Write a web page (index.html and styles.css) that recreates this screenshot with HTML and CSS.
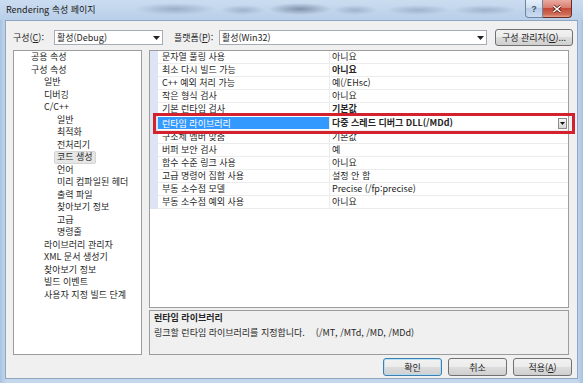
FILE: index.html
```html
<!DOCTYPE html>
<html lang="ko">

<head>
    <meta charset="UTF-8">
    <meta name="viewport" content="width=device-width, initial-scale=1.0">
    <title>Rendering 속성 페이지</title>
    <link rel="stylesheet" href="styles.css">
</head>

<body>
    <div class="window">
        <!-- Title bar -->
        <div class="titlebar">
            <span class="title">Rendering 속성 페이지</span>
            <div class="caption">
                <span class="cap-btn help">?</span>
                <span class="cap-btn close">
                    <svg width="10" height="8" viewBox="0 0 10 8">
                        <path d="M1.5 1 L8.5 7 M8.5 1 L1.5 7" stroke="#5a1d16" stroke-width="3" />
                        <path d="M1.5 1 L8.5 7 M8.5 1 L1.5 7" stroke="#fff" stroke-width="1.6" />
                    </svg>
                </span>
            </div>
        </div>

        <div class="client">
            <!-- Configuration / platform -->
            <div class="toolbar">
                <span class="tb-label cfg-label">구성(<u>C</u>):</span>
                <div class="combo combo-cfg">
                    <span>활성(Debug)</span>
                    <svg class="arrow" width="7" height="4" viewBox="0 0 7 4"><path d="M0 0h7L3.5 4z" fill="#222" /></svg>
                </div>
                <span class="tb-label plat-label">플랫폼(<u>P</u>):</span>
                <div class="combo combo-plat">
                    <span>활성(Win32)</span>
                    <svg class="arrow" width="7" height="4" viewBox="0 0 7 4"><path d="M0 0h7L3.5 4z" fill="#222" /></svg>
                </div>
                <button class="btn mgr">구성 관리자(<u>O</u>)...</button>
            </div>

            <div class="main">
                <!-- Category tree -->
                <ul class="tree">
                    <li class="l1">공용 속성</li>
                    <li class="l1">구성 속성</li>
                    <li class="l2">일반</li>
                    <li class="l2">디버깅</li>
                    <li class="l2">C/C++</li>
                    <li class="l3">일반</li>
                    <li class="l3">최적화</li>
                    <li class="l3">전처리기</li>
                    <li class="l3"><span class="sel">코드 생성</span></li>
                    <li class="l3">언어</li>
                    <li class="l3">미리 컴파일된 헤더</li>
                    <li class="l3">출력 파일</li>
                    <li class="l3">찾아보기 정보</li>
                    <li class="l3">고급</li>
                    <li class="l3">명령줄</li>
                    <li class="l2">라이브러리 관리자</li>
                    <li class="l2">XML 문서 생성기</li>
                    <li class="l2">찾아보기 정보</li>
                    <li class="l2">빌드 이벤트</li>
                    <li class="l2">사용자 지정 빌드 단계</li>
                </ul>

                <!-- Property grid -->
                <div class="grid">
                    <div class="list">
                        <div class="row"><span class="margin"></span><span class="name">문자열 풀링 사용</span><span class="value">아니요</span></div>
                        <div class="row"><span class="margin"></span><span class="name">최소 다시 빌드 가능</span><span class="value bold">아니요</span></div>
                        <div class="row"><span class="margin"></span><span class="name">C++ 예외 처리 가능</span><span class="value">예(/EHsc)</span></div>
                        <div class="row"><span class="margin"></span><span class="name">작은 형식 검사</span><span class="value">아니요</span></div>
                        <div class="row"><span class="margin"></span><span class="name">기본 런타임 검사</span><span class="value bold">기본값</span></div>
                        <div class="row current">
                            <span class="margin"></span>
                            <span class="name">런타임 라이브러리</span>
                            <span class="value bold">다중 스레드 디버그 DLL(/MDd)
                                <span class="dd"><svg width="5" height="3" viewBox="0 0 5 3"><path d="M0 0h5L2.5 3z" fill="#111" /></svg></span>
                            </span>
                        </div>
                        <div class="row"><span class="margin"></span><span class="name">구조체 멤버 맞춤</span><span class="value">기본값</span></div>
                        <div class="row"><span class="margin"></span><span class="name">버퍼 보안 검사</span><span class="value">예</span></div>
                        <div class="row"><span class="margin"></span><span class="name">함수 수준 링크 사용</span><span class="value">아니요</span></div>
                        <div class="row"><span class="margin"></span><span class="name">고급 명령어 집합 사용</span><span class="value">설정 안 함</span></div>
                        <div class="row"><span class="margin"></span><span class="name">부동 소수점 모델</span><span class="value">Precise (/fp:precise)</span></div>
                        <div class="row"><span class="margin"></span><span class="name">부동 소수점 예외 사용</span><span class="value">아니요</span></div>
                    </div>
                    <div class="desc">
                        <div class="desc-title">런타임 라이브러리</div>
                        <div class="desc-text">링크할 런타임 라이브러리를 지정합니다.<span class="switches">(/MT, /MTd, /MD, /MDd)</span></div>
                    </div>
                </div>
            </div>

            <!-- Dialog buttons -->
            <div class="buttons">
                <button class="btn default">확인</button>
                <button class="btn">취소</button>
                <button class="btn">적용(<u>A</u>)</button>
            </div>
        </div>
    </div>
</body>

</html>
```
FILE: styles.css
```css
body {
    margin: 0;
    font-family: "Noto Sans CJK KR", "Noto Sans", sans-serif;
    font-size: 9px;
    color: #262626;
}

.window {
    width: 583px;
    height: 383px;
    box-sizing: border-box;
    padding: 0 5px 4px 5px;
    display: flex;
    flex-direction: column;
    overflow: hidden;
    background: linear-gradient(90deg, #a9c3e0, #c3d7ed 1%, #c3d7ed 99%, #a9c3e0);
}

/* title bar */
.titlebar {
    height: 20px;
    margin: 0 -5px;
    padding: 0 11px 0 6px;
    display: flex;
    background:
        radial-gradient(ellipse 40px 6px at 175px 9px, rgba(80, 100, 130, .35), transparent),
        radial-gradient(ellipse 22px 5px at 243px 10px, rgba(80, 100, 130, .3), transparent),
        radial-gradient(ellipse 32px 6px at 300px 9px, rgba(50, 65, 90, .45), transparent),
        radial-gradient(ellipse 22px 5px at 355px 10px, rgba(80, 100, 130, .3), transparent),
        radial-gradient(ellipse 32px 5px at 418px 10px, rgba(80, 100, 130, .3), transparent),
        radial-gradient(ellipse 32px 5px at 485px 10px, rgba(80, 100, 130, .3), transparent),
        linear-gradient(#cadcf0, #b9cfe8);
}

.title {
    line-height: 20px;
    color: #1a1a1a;
}

.caption {
    margin-left: auto;
    display: flex;
    align-self: flex-start;
}

.cap-btn {
    height: 18px;
    box-sizing: border-box;
    display: flex;
    align-items: center;
    justify-content: center;
}

.help {
    width: 18px;
    border: 1px solid #6f86a3;
    border-top: none;
    border-radius: 0 0 0 4px;
    background: linear-gradient(#e6effa, #cfdfef 45%, #b7cde6 50%, #cadcf0);
    font-family: "Liberation Sans", sans-serif;
    font-weight: bold;
    font-size: 9px;
    color: #3e5069;
}

.close {
    width: 29px;
    border: 1px solid #6b2c26;
    border-top: none;
    border-left: none;
    border-radius: 0 0 4px 0;
    background: linear-gradient(#eaaba1, #d97c6e 45%, #c44a37 50%, #cf6c58 85%, #e7a28d);
}

/* client area */
.client {
    flex: 1;
    background-color: #f0f0f0;
    border: 1px solid #8ea6c1;
    padding: 8px 4px 0 7px;
    display: flex;
    flex-direction: column;
}

.toolbar {
    height: 17px;
    display: flex;
    align-items: center;
}

.tb-label {
    white-space: nowrap;
}

.cfg-label {
    width: 41px;
}

.plat-label {
    margin-left: 11px;
    width: 45px;
}

.combo {
    height: 15px;
    box-sizing: border-box;
    border: 1px solid #a5acb5;
    background-color: #fff;
    display: flex;
    align-items: center;
    padding: 0 2px;
}

.combo .arrow {
    margin-left: auto;
}

.combo-cfg {
    width: 109px;
}

.combo-plat {
    width: 268px;
}

.btn {
    font: inherit;
    color: inherit;
    height: 18px;
    width: 59px;
    padding: 0;
    border: 1px solid #707070;
    border-radius: 3px;
    background: linear-gradient(#f2f2f2, #ebebeb 50%, #dddddd 50%, #cfcfcf);
}

.btn.mgr {
    margin-left: 8px;
    width: 78px;
    height: 17px;
}

.btn.default {
    border-color: #3c7fb1;
    box-shadow: inset 0 0 0 1px rgba(170, 220, 245, .8);
}

.main {
    margin-top: 4px;
    margin-right: 4px;
    height: 305px;
    display: flex;
    gap: 7px;
}

/* tree */
.tree {
    width: 129px;
    box-sizing: border-box;
    margin: 0;
    padding: 0;
    list-style: none;
    border: 1px solid #9c9c9c;
    background-color: #fff;
}

.tree li {
    height: 12.5px;
    line-height: 12.5px;
    white-space: nowrap;
}

.tree .l1 {
    padding-left: 17px;
}

.tree .l2 {
    padding-left: 30px;
}

.tree .l3 {
    padding-left: 43px;
}

.tree .sel {
    display: inline-block;
    margin-left: -3px;
    padding: 0 2px 0 2px;
    line-height: 10.5px;
    background-color: #e6e6e6;
    border: 1px solid #d4d4d4;
    border-radius: 2px;
}

/* property grid */
.grid {
    width: 420px;
    display: flex;
    flex-direction: column;
}

.list {
    height: 258px;
    box-sizing: border-box;
    border: 1px solid #9c9c9c;
    background-color: #fff;
}

.row {
    display: flex;
    height: 13px;
}

.row .margin {
    width: 8px;
    background-color: #dde4f4;
}

.row .name,
.row .value {
    box-sizing: border-box;
    line-height: 12px;
    border-bottom: 1px solid #ececec;
    white-space: nowrap;
}

.row .name {
    width: 171px;
    padding-left: 4px;
}

.row .value {
    flex: 1;
    display: flex;
    align-items: center;
    padding-left: 2px;
    border-left: 1px solid #ececec;
}

.bold {
    font-weight: bold;
}

.row.current {
    height: 15px;
    position: relative;
}

.row.current .name {
    line-height: 14px;
    background-color: #3399ff;
    background-clip: content-box;
    padding: 1px 0 1px 0;
    text-indent: 4px;
    color: #fff;
}

.row.current::after {
    content: "";
    position: absolute;
    left: 3px;
    right: -7px;
    top: -3px;
    bottom: -3px;
    border: 3.5px solid #d3222d;
}

.dd {
    margin-left: auto;
    margin-right: 1px;
    width: 9px;
    height: 11px;
    box-sizing: border-box;
    border: 1px solid #8b8b8b;
    background: linear-gradient(#f6f6f6, #d6d6d6);
    display: flex;
    align-items: center;
    justify-content: center;
}

.desc {
    flex: 1;
    margin-top: 2px;
    padding: 0 4px;
    border: 1px solid #9c9c9c;
    background-color: #f0f0f0;
}

.desc-title {
    font-weight: bold;
    line-height: 13px;
}

.desc-text {
    margin-top: 2px;
    line-height: 13px;
}

.switches {
    margin-left: 11px;
}

.buttons {
    margin-top: 3px;
    margin-right: 1px;
    display: flex;
    justify-content: flex-end;
    gap: 6px;
}
```
